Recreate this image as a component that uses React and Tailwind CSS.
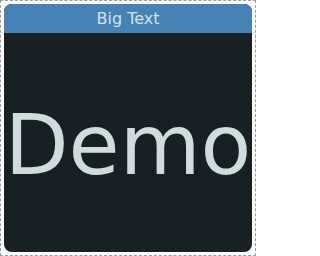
import React from 'react'

export default function App() {
  return (
    <div className="w-[256px] h-[256px] border border-dashed border-[#9a9a9a] p-[3px] bg-white">
      <div className="w-full h-full rounded-[8px] overflow-hidden bg-[#182024] flex flex-col" style={{ fontFamily: '"DejaVu Sans", sans-serif' }}>
        <div className="h-[29px] shrink-0 bg-[#4682b4] text-[#d3e3f0] text-[16px] flex items-center justify-center pt-[1px]">
          Big Text
        </div>
        <div className="flex-1 overflow-hidden pt-[71px] text-center">
          <div className="text-[83px] leading-none text-[#d0dbdb] whitespace-nowrap">Demo</div>
        </div>
      </div>
    </div>
  )
}
